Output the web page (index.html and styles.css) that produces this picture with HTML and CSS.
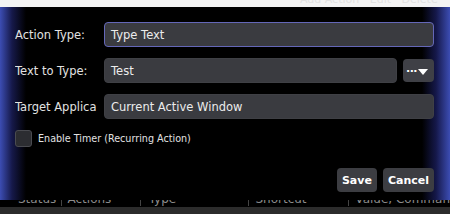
FILE: index.html
```html
<!DOCTYPE html>
<html lang="en">
<head>
  <meta charset="UTF-8">
  <title>Edit Action</title>
  <link rel="stylesheet" href="styles.css">
</head>
<body>

  <div class="behind-top">Add Action &nbsp; Edit &nbsp; Delete</div>

  <div class="dialog">
    <div class="row">
      <label class="label">Action Type:</label>
      <div class="field focused">Type Text</div>
    </div>
    <div class="row">
      <label class="label">Text to Type:</label>
      <div class="field">Test</div>
      <button class="menu-btn"><span class="dots">&middot;&middot;&middot;</span><span class="caret"></span></button>
    </div>
    <div class="row">
      <label class="label">Target Applica</label>
      <div class="field">Current Active Window</div>
    </div>

    <div class="check-row">
      <span class="checkbox"></span>
      <span>Enable Timer (Recurring Action)</span>
    </div>

    <div class="actions">
      <button class="btn">Save</button>
      <button class="btn">Cancel</button>
    </div>
  </div>

  <!-- table header behind the dialog -->
  <div class="table-head">
    <div class="cols">
      <span class="c1">Status</span>
      <span class="c2">Actions</span>
      <span class="c3">Type</span>
      <span class="c4">Shortcut</span>
      <span class="c5">Value, Comman</span>
    </div>
  </div>

</body>
</html>
```

FILE: styles.css
```css
body {
  margin: 0;
  padding: 0;
  width: 450px;
  height: 214px;
  overflow: hidden;
  background: #000;
  font-family: "DejaVu Sans", sans-serif;
  color: #e6e6e6;
}

.behind-top {
  height: 7px;
  background: #f4f4f4;
  color: #e2e2e2;
  font-size: 11px;
  line-height: 0;
  padding-left: 300px;
  overflow: hidden;
}

.dialog {
  height: 193px;
  box-sizing: border-box;
  padding: 15px 16px 0 15px;
  background: linear-gradient(to right, #3c4db3 0, #16194a 12px, #000 26px, #000 422px, #15184a 436px, #3c4db3 450px);
}

.row {
  display: flex;
  align-items: center;
  height: 25px;
  margin-bottom: 11px;
}

.label {
  width: 89px;
  flex: none;
  font-size: 11.5px;
  color: #e2e2e2;
  white-space: nowrap;
  overflow: hidden;
}

.field {
  flex: 1;
  height: 25px;
  box-sizing: border-box;
  padding: 0 6px;
  line-height: 24px;
  font-size: 11.5px;
  color: #ececec;
  background: #3a3b40;
  border: 1px solid #3f4045;
  border-radius: 4px;
}

.field.focused {
  border-color: #6467b8;
}

.menu-btn {
  flex: none;
  margin-left: 6px;
  width: 31px;
  height: 23px;
  padding: 0 0 0 3px;
  display: flex;
  align-items: center;
  gap: 1px;
  background: #3f4046;
  border: none;
  border-radius: 4px;
  color: #fff;
}

.menu-btn .dots {
  font-family: "DejaVu Sans", sans-serif;
  font-size: 11px;
  font-weight: bold;
  line-height: 10px;
  letter-spacing: -0.5px;
  margin-top: 3px;
}

.menu-btn .caret {
  width: 0;
  height: 0;
  border-left: 5px solid transparent;
  border-right: 5px solid transparent;
  border-top: 6px solid #fff;
  margin-top: 3px;
}

.check-row {
  display: flex;
  align-items: center;
  gap: 6px;
  height: 17px;
  font-size: 9.6px;
  color: #e2e2e2;
}

.checkbox {
  width: 17px;
  height: 17px;
  box-sizing: border-box;
  background: #2c2d31;
  border: 1px solid #4a4b50;
  border-radius: 3px;
}

.actions {
  display: flex;
  justify-content: flex-end;
  gap: 6px;
  margin-top: 21px;
}

.btn {
  height: 24px;
  padding: 0 5px;
  font-family: "DejaVu Sans", sans-serif;
  font-size: 11px;
  font-weight: bold;
  color: #fff;
  background: #3c3d42;
  border: none;
  border-radius: 4px;
}

.table-head {
  height: 14px;
  overflow: hidden;
  background: linear-gradient(#000 0, #000 7px, #2c2c2c 7px, #2c2c2c 14px);
}

.cols {
  position: relative;
  top: -8px;
  display: flex;
  font-size: 12px;
  line-height: 14px;
  color: #8c8c8c;
  white-space: nowrap;
}

.cols span {
  box-sizing: border-box;
  border-right: 1px solid #444;
  padding-left: 6px;
}

.c1 { width: 62px; padding-left: 18px !important; }
.c2 { width: 80px; }
.c3 { width: 110px; padding-left: 8px !important; }
.c4 { width: 101px; }
.c5 { flex: 1; border-right: none !important; }
```
